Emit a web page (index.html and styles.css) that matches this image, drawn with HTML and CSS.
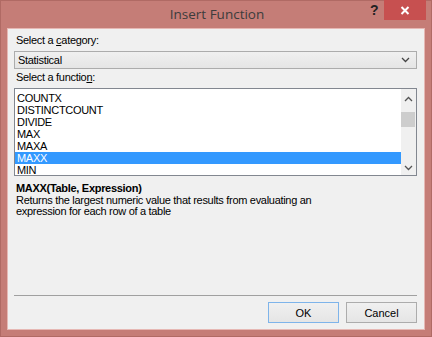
FILE: index.html
```html
<!DOCTYPE html>
<html lang="en">
<head>
  <meta charset="UTF-8">
  <title>Insert Function</title>
  <link rel="stylesheet" href="styles.css">
</head>
<body>
  <div class="window">
    <div class="titlebar">
      <span class="title">Insert Function</span>
      <span class="help">?</span>
      <span class="close">
        <svg width="10" height="9" viewBox="0 0 10 9"><path d="M1.5 1 L8.5 8 M8.5 1 L1.5 8" stroke="#fff" stroke-width="2"/></svg>
      </span>
    </div>
    <div class="client">
      <div class="label">Select a <u>c</u>ategory:</div>
      <div class="combo">
        <span>Statistical</span>
        <svg class="chev" width="9" height="6" viewBox="0 0 9 6"><path d="M1 1 L4.5 4.5 L8 1" fill="none" stroke="#444" stroke-width="1.3"/></svg>
      </div>
      <div class="label label2">Select a functio<u>n</u>:</div>
      <div class="listbox">
        <ul class="items">
          <li>COUNTX</li>
          <li>DISTINCTCOUNT</li>
          <li>DIVIDE</li>
          <li>MAX</li>
          <li>MAXA</li>
          <li class="selected">MAXX</li>
          <li>MIN</li>
        </ul>
        <div class="scrollbar">
          <svg class="arrow" width="9" height="6" viewBox="0 0 9 6"><path d="M1 5 L4.5 1.5 L8 5" fill="none" stroke="#555" stroke-width="1.3"/></svg>
          <div class="thumb"></div>
          <svg class="arrow down" width="9" height="6" viewBox="0 0 9 6"><path d="M1 1 L4.5 4.5 L8 1" fill="none" stroke="#555" stroke-width="1.3"/></svg>
        </div>
      </div>
      <div class="syntax">MAXX(Table, Expression)</div>
      <div class="desc">Returns the largest numeric value that results from evaluating an<br>expression for each row of a table</div>
      <div class="footer">
        <button class="btn default">OK</button>
        <button class="btn">Cancel</button>
      </div>
    </div>
  </div>
</body>
</html>
```

FILE: styles.css
```css
html,body{margin:0;padding:0;}
body{background:#c57d77;font-family:"Liberation Sans",Arial,sans-serif;font-size:11px;letter-spacing:-0.3px;color:#000;}
ul,li{list-style:none;margin:0;padding:0;}

.window{width:432px;height:337px;display:flex;flex-direction:column;box-sizing:border-box;border:1px solid #b06a64;}
.titlebar{height:27px;position:relative;display:flex;align-items:center;justify-content:center;}
.title{font-family:"Open Sans","Noto Sans",sans-serif;font-size:13.5px;letter-spacing:0;color:#3c3c3c;margin-top:-2px;margin-left:2px;}
.help{position:absolute;left:369px;top:1px;font-family:"Liberation Sans",Arial,sans-serif;font-weight:bold;font-size:14px;color:#222;}
.close{position:absolute;right:5px;top:-1px;width:42px;height:20px;background:#c75050;display:flex;align-items:center;justify-content:center;}

.client{flex:1;margin:0 6px 6px 6px;background:#f0f0f0;border:1px solid #e6b8b4;padding:5px 7px 6px 6px;display:flex;flex-direction:column;}
.label{line-height:13px;padding-left:2px;}
.combo{margin-top:4px;height:18px;box-sizing:border-box;border:1px solid #acacac;background:linear-gradient(#f0f0f0,#e5e5e5);display:flex;align-items:center;padding:0 6px 0 3px;}
.combo span{flex:1;}
.label2{margin-top:2px;}
.listbox{margin-top:4px;height:88px;box-sizing:border-box;border:1px solid #828790;background:#fff;display:flex;overflow:hidden;}
.items{flex:1;padding-top:3px;}
.items li{height:12px;line-height:12px;padding-left:2px;}
.items li.selected{background:#3399ff;color:#fff;}
.scrollbar{width:15px;background:#f0f0f0;display:flex;flex-direction:column;align-items:center;}
.arrow{margin-top:7px;}
.thumb{width:14px;height:15px;background:#cdcdcd;margin-top:10px;margin-left:-1px;}
.arrow.down{margin-top:auto;margin-bottom:4px;}

.syntax{font-weight:bold;margin-top:6px;line-height:13px;padding-left:2px;}
.desc{line-height:11px;padding-left:2px;}
.footer{margin-top:auto;border-top:1px solid #a0a0a0;padding-top:6px;display:flex;justify-content:flex-end;gap:7px;}
.btn{width:71px;height:21px;box-sizing:border-box;border:1px solid #acacac;background:linear-gradient(#f0f0f0,#e5e5e5);font-family:"Liberation Sans",Arial,sans-serif;font-size:11px;color:#000;padding:0;}
.btn.default{border-color:#7eb4ea;}
```
